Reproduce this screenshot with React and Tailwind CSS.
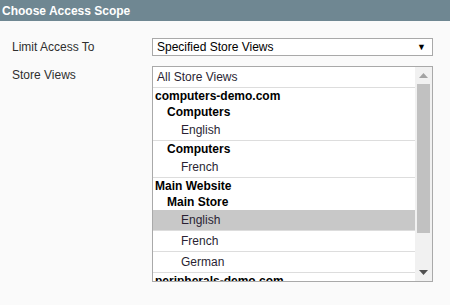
export default function App() {
    const rows = [
        { type: 'option', label: 'All Store Views', indent: 'pl-[4px]' },
        { type: 'group', label: 'computers-demo.com', indent: 'pl-[2px]' },
        { type: 'group', label: 'Computers', indent: 'pl-[14px]' },
        { type: 'option', label: 'English', indent: 'pl-[28px]' },
        { type: 'group', label: 'Computers', indent: 'pl-[14px]' },
        { type: 'option', label: 'French', indent: 'pl-[28px]' },
        { type: 'group', label: 'Main Website', indent: 'pl-[2px]' },
        { type: 'group', label: 'Main Store', indent: 'pl-[14px]' },
        { type: 'option', label: 'English', indent: 'pl-[28px]', selected: true },
        { type: 'option', label: 'French', indent: 'pl-[28px]' },
        { type: 'option', label: 'German', indent: 'pl-[28px]' },
        { type: 'group', label: 'peripherals-demo.com', indent: 'pl-[2px]' },
    ];

    return (
        <div className="w-[450px] h-[305px] bg-[#fafafa] font-['Liberation_Sans',Arial,sans-serif] text-[12px] text-[#2f2f2f] overflow-hidden">
            {/* Header */}
            <div className="h-[21px] bg-[#6f8792] flex items-center px-[2px]">
                <h2 className="text-white font-bold text-[12px] leading-none">Choose Access Scope</h2>
            </div>

            <div className="pl-[12px] pt-[17px]">
                {/* Limit access */}
                <div className="flex items-center h-[18px]">
                    <label className="w-[140px] leading-none">Limit Access To</label>
                    <div className="w-[281px] h-[18px] bg-white border border-[#a9a9a9] flex items-center justify-between pl-[4px] pr-[6px]">
                        <span className="leading-none text-black">Specified Store Views</span>
                        <span className="text-[9px] leading-none text-black">▼</span>
                    </div>
                </div>

                {/* Store views */}
                <div className="flex mt-[10px]">
                    <label className="w-[140px] pt-[3px] leading-none">Store Views</label>
                    <div className="w-[281px] h-[216px] bg-white border border-[#a9a9a9] flex overflow-hidden">
                        <div className="flex-1 flex flex-col min-w-0">
                            {rows.map((row, i) =>
                                row.type === 'group' ? (
                                    <div key={i} className={`shrink-0 h-[16px] pb-[1px] flex items-center font-bold text-black whitespace-nowrap ${row.indent}`}>
                                        {row.label}
                                    </div>
                                ) : (
                                    <div
                                        key={i}
                                        className={`shrink-0 h-[21px] pb-[1px] flex items-center border-b border-[#dddddd] text-[#2a1f33] ${row.indent} ${row.selected ? 'bg-[#c8c8c8]' : ''}`}
                                    >
                                        {row.label}
                                    </div>
                                )
                            )}
                        </div>
                        {/* Scrollbar */}
                        <div className="w-[17px] bg-[#f1f1f1] flex flex-col items-center">
                            <div className="h-[17px] flex items-center justify-center">
                                <svg width="9" height="5" viewBox="0 0 9 5">
                                    <path d="M4.5 0L9 5H0z" fill="#a3a3a3" />
                                </svg>
                            </div>
                            <div className="w-[13px] h-[149px] bg-[#c1c1c1]" />
                            <div className="flex-1" />
                            <div className="h-[17px] flex items-center justify-center">
                                <svg width="9" height="5" viewBox="0 0 9 5">
                                    <path d="M0 0H9L4.5 5z" fill="#505050" />
                                </svg>
                            </div>
                        </div>
                    </div>
                </div>
            </div>
        </div>
    );
}
